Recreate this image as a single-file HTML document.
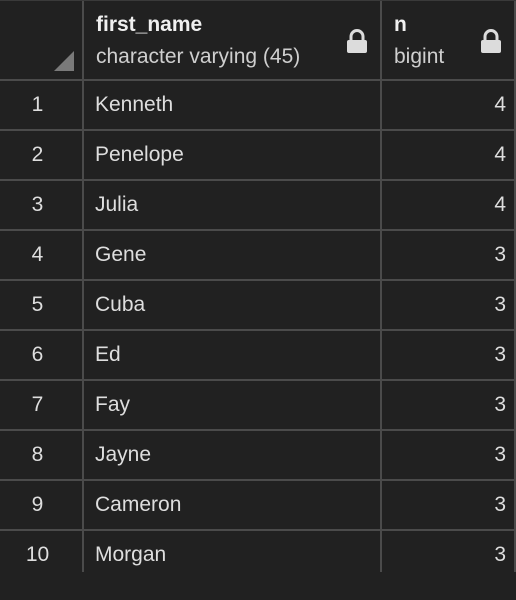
<!DOCTYPE html>
<html><head><style>
html,body{margin:0;padding:0;background:#212121;width:516px;height:600px;overflow:hidden;font-family:"Liberation Sans",Arial,sans-serif;}
.t{position:absolute;color:#dedede;font-size:21px;line-height:24px;white-space:nowrap;}
.v{position:absolute;background:#4b4b4b;width:2px;}
.h{position:absolute;background:#4b4b4b;height:2px;left:0;width:516px;}
.lock{position:absolute;width:22px;height:24px;}
</style></head><body>
<div class="v" style="left:82px;top:0;height:572px"></div>
<div class="v" style="left:380px;top:0;height:572px"></div>
<div class="v" style="left:514px;top:0;height:572px"></div>
<div class="h" style="top:0;height:1px;background:#3a3a3a"></div>
<div class="h" style="top:79px"></div>
<div class="h" style="top:129px"></div>
<div class="h" style="top:179px"></div>
<div class="h" style="top:229px"></div>
<div class="h" style="top:279px"></div>
<div class="h" style="top:329px"></div>
<div class="h" style="top:379px"></div>
<div class="h" style="top:429px"></div>
<div class="h" style="top:479px"></div>
<div class="h" style="top:529px"></div>
<svg style="position:absolute;left:54px;top:51px" width="20" height="20"><polygon points="20,0 20,20 0,20" fill="#7a7a7a"/></svg>
<div class="t" style="left:96px;top:13px;font-weight:bold;color:#f0f0f0">first_name</div>
<div class="t" style="left:96px;top:45px;color:#cfcfcf">character varying (45)</div>
<div class="t" style="left:394px;top:13px;font-weight:bold;color:#f0f0f0">n</div>
<div class="t" style="left:394px;top:45px;color:#cfcfcf">bigint</div>
<svg class="lock" style="left:346px;top:29px" viewBox="0 0 22 24"><path d="M5 11V7.5a6 6 0 0 1 12 0V11" fill="none" stroke="#dcdcdc" stroke-width="3"/><rect x="1" y="11" width="20" height="13" rx="2" fill="#dcdcdc"/></svg>
<svg class="lock" style="left:480px;top:29px" viewBox="0 0 22 24"><path d="M5 11V7.5a6 6 0 0 1 12 0V11" fill="none" stroke="#dcdcdc" stroke-width="3"/><rect x="1" y="11" width="20" height="13" rx="2" fill="#dcdcdc"/></svg>

<div class="t" style="left:0;width:75px;text-align:center;top:93px">1</div><div class="t" style="left:95px;top:93px">Kenneth</div><div class="t" style="right:10px;top:93px">4</div>
<div class="t" style="left:0;width:75px;text-align:center;top:143px">2</div><div class="t" style="left:95px;top:143px">Penelope</div><div class="t" style="right:10px;top:143px">4</div>
<div class="t" style="left:0;width:75px;text-align:center;top:193px">3</div><div class="t" style="left:95px;top:193px">Julia</div><div class="t" style="right:10px;top:193px">4</div>
<div class="t" style="left:0;width:75px;text-align:center;top:243px">4</div><div class="t" style="left:95px;top:243px">Gene</div><div class="t" style="right:10px;top:243px">3</div>
<div class="t" style="left:0;width:75px;text-align:center;top:293px">5</div><div class="t" style="left:95px;top:293px">Cuba</div><div class="t" style="right:10px;top:293px">3</div>
<div class="t" style="left:0;width:75px;text-align:center;top:343px">6</div><div class="t" style="left:95px;top:343px">Ed</div><div class="t" style="right:10px;top:343px">3</div>
<div class="t" style="left:0;width:75px;text-align:center;top:393px">7</div><div class="t" style="left:95px;top:393px">Fay</div><div class="t" style="right:10px;top:393px">3</div>
<div class="t" style="left:0;width:75px;text-align:center;top:443px">8</div><div class="t" style="left:95px;top:443px">Jayne</div><div class="t" style="right:10px;top:443px">3</div>
<div class="t" style="left:0;width:75px;text-align:center;top:493px">9</div><div class="t" style="left:95px;top:493px">Cameron</div><div class="t" style="right:10px;top:493px">3</div>
<div class="t" style="left:0;width:75px;text-align:center;top:543px">10</div><div class="t" style="left:95px;top:543px">Morgan</div><div class="t" style="right:10px;top:543px">3</div>
</body></html>
